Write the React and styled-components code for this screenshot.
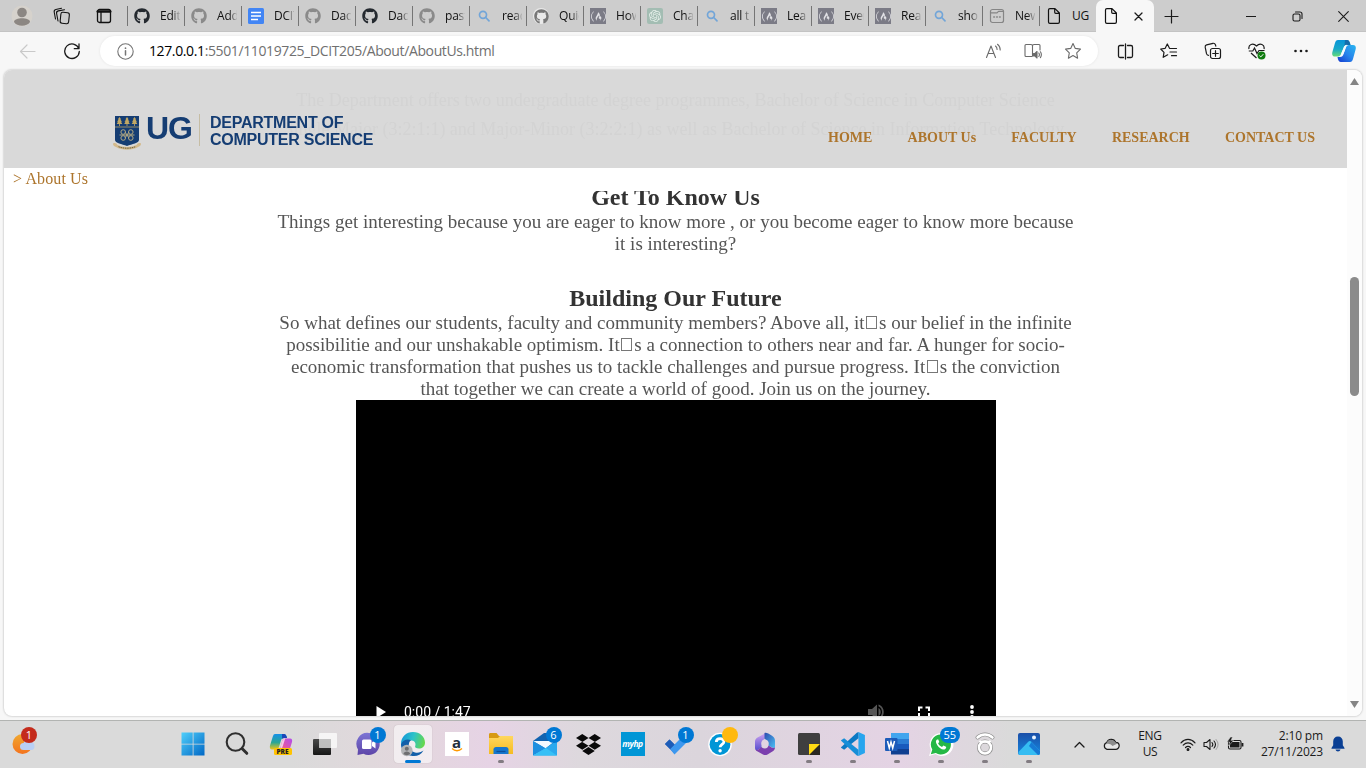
import React from 'react';
import styled, { createGlobalStyle, css } from 'styled-components';
import { FaGithub, FaDropbox, FaFreeCodeCamp } from 'react-icons/fa';
import { SiOpenai } from 'react-icons/si';

const Global = createGlobalStyle`
  * { box-sizing: border-box; }
  body { margin: 0; overflow: hidden; background: #f7f7f7; }
  svg { display: block; flex: none; }
`;

const ui = `"Open Sans", "Noto Sans", sans-serif`;
const serif = `"Liberation Serif", "Times New Roman", serif`;
const sans = `"Liberation Sans", Arial, sans-serif`;

const Screen = styled.div`
  width: 1366px;
  height: 768px;
  display: flex;
  flex-direction: column;
  overflow: hidden;
  background: #f7f7f7;
  font-family: ${ui};
`;

/* ---------- tab strip ---------- */
const TabStrip = styled.div`
  height: 32px;
  flex: none;
  display: flex;
  align-items: center;
  background: #cdcdcd;
  box-shadow: inset 0 -1px 0 #c3c3c3;
`;
const StripTools = styled.div`
  width: 127px;
  display: flex;
  align-items: center;
  padding-left: 11px;
  gap: 20px;
  svg:last-child { margin-left: 4px; }
`;
const Tab = styled.div`
  width: 57px;
  height: 20px;
  display: flex;
  align-items: center;
  border-left: 1px solid #757575;
  padding-left: 6px;
  gap: 10px;
`;
const TabLabel = styled.span`
  width: 20px;
  overflow: hidden;
  white-space: nowrap;
  font-size: 12px;
  line-height: 16px;
  letter-spacing: -0.2px;
  color: #111;
  ${p => p.$fade && css`mask-image: linear-gradient(90deg, #000 60%, transparent 105%);`}
`;
const ActiveTab = styled.div`
  width: 58px;
  height: 32px;
  display: flex;
  align-items: center;
  justify-content: space-between;
  padding: 0 11px 0 7px;
  background: #f7f7f7;
  border-radius: 7px 7px 0 0;
`;
const NewTab = styled.div`
  padding-left: 10px;
  flex: 1;
`;
const WindowButtons = styled.div`
  display: flex;
  align-items: center;
  gap: 35.500px;
  padding-right: 17px;
`;
const Tile = styled.div`
  width: 16px;
  height: 16px;
  flex: none;
  display: flex;
  align-items: center;
  justify-content: center;
  background: ${p => p.$bg};
  border-radius: ${p => p.$r || 0}px;
  color: ${p => p.$fg || '#fff'};
`;

/* ---------- toolbar ---------- */
const Toolbar = styled.div`
  height: 38px;
  flex: none;
  display: flex;
  align-items: center;
  background: #f7f7f7;
`;
const NavButtons = styled.div`
  width: 100px;
  flex: none;
  display: flex;
  align-items: center;
  gap: 27px;
  padding-left: 19px;
`;
const AddressBar = styled.div`
  width: 998px;
  flex: none;
  height: 30px;
  display: flex;
  align-items: center;
  padding: 0 16px 0 17px;
  border-radius: 15px;
  background: #fff;
  box-shadow: 0 0 3px rgba(0, 0, 0, 0.08);
`;
const Url = styled.span`
  flex: 1;
  margin-left: 15px;
  font-size: 14px;
  line-height: 20px;
  letter-spacing: -0.38px;
  white-space: nowrap;
  color: #707070;
  b { font-weight: 400; color: #000; }
`;
const AddressIcons = styled.div`
  display: flex;
  align-items: center;
  gap: 22px;
`;
const ToolIcons = styled.div`
  width: 268px;
  flex: none;
  display: flex;
  align-items: center;
  padding-left: 5px;
`;
const ToolSlot = styled.div`
  width: 44px;
  flex: none;
  display: flex;
  justify-content: center;
  &:last-child { width: 42px; }
`;

/* ---------- page ---------- */
const Viewport = styled.div`
  height: 646px;
  margin: 0 4px;
  flex: none;
  display: flex;
  border-radius: 8px;
  overflow: hidden;
  background: #fff;
`;
const ViewportShade = styled.div`
  flex: none;
  border-radius: 8px;
  filter: drop-shadow(0 0 1.2px rgba(0, 0, 0, 0.28));
`;
const Page = styled.div`
  width: 1343px;
  display: flex;
  flex-direction: column;
  font-family: ${serif};
`;
const Header = styled.header`
  position: relative;
  height: 98px;
  flex: none;
  display: flex;
  justify-content: space-between;
  padding: 0 32px 0 108px;
  background: #d9d9d9;
`;
const Underlay = styled.div`
  position: absolute;
  top: 16px;
  left: 0;
  width: 100%;
  text-align: center;
  font-size: 18px;
  line-height: 29px;
  white-space: nowrap;
  color: #d3d3d3;
`;
const Brand = styled.div`
  position: relative;
  display: flex;
  align-items: flex-start;
  padding-top: 44px;
  font-family: ${sans};
  font-weight: 700;
  color: #153d73;
`;
const Initials = styled.span`
  margin: -4px 0 0 4px;
  width: 53px;
  font-size: 32px;
  line-height: 36px;
  letter-spacing: -1.2px;
`;
const DeptName = styled.span`
  height: 32px;
  padding-left: 10px;
  border-left: 1px solid #c6bda4;
  font-size: 16px;
  line-height: 17px;
  letter-spacing: -0.25px;
  white-space: nowrap;
`;
const Menu = styled.nav`
  position: relative;
  display: flex;
  gap: 35.200px;
  padding-top: 59px;
  font-size: 14px;
  line-height: 17px;
  font-weight: 700;
  color: #ad752c;
  white-space: nowrap;
`;
const Crumb = styled.div`
  height: 23px;
  flex: none;
  padding: 2px 9px;
  font-size: 16px;
  line-height: 18px;
  letter-spacing: 0.12px;
  color: #ad752c;
`;
const Content = styled.main`
  flex: 1;
  min-height: 0;
  overflow: hidden;
  display: flex;
  flex-direction: column;
  align-items: center;
`;
const Title = styled.h2`
  margin: ${p => p.$top}px 0 0;
  font-size: 24px;
  line-height: 27px;
  color: #333;
`;
const Copy = styled.p`
  margin: 0;
  text-align: center;
  font-size: 19px;
  line-height: 22px;
  white-space: nowrap;
  color: #555;
`;
const Tofu = styled.span`
  display: inline-block;
  width: 11px;
  height: 13px;
  margin: 0 2px 0 1.500px;
  border: 1px solid #777;
`;
const Video = styled.div`
  width: 640px;
  height: 360px;
  flex: none;
  margin-left: 1px;
  background: #000;
  padding: 300px 12px 0 16px;
`;
const Controls = styled.div`
  height: 24px;
  display: flex;
  align-items: center;
  color: #fff;
  font: 14px Roboto, ${sans};
`;
const Time = styled.span`
  flex: 1;
  margin-left: 14px;
`;
const ControlIcons = styled.div`
  display: flex;
  gap: 24px;
`;
const Scrollbar = styled.div`
  width: 15px;
  display: flex;
  flex-direction: column;
  align-items: center;
  background: #fcfcfc;
  padding: 8px 0;
`;
const Track = styled.div`
  flex: 1;
  padding-top: 192px;
`;
const Thumb = styled.div`
  width: 9px;
  height: 119px;
  border-radius: 5px;
  background: #8b8b8b;
`;

/* ---------- taskbar ---------- */
const Taskbar = styled.div`
  height: 48px;
  margin-top: 4px;
  flex: none;
  display: flex;
  align-items: flex-start;
  border-top: 1px solid #b2b4b2;
  background: linear-gradient(90deg, #dadada 0, #dadada 290px, #e3d7dd 410px, #e6d3e5 490px, #ddd8dd 580px, #dbd5dc 700px, #e4d3e4 900px, #dadada 1010px);
`;
const Weather = styled.div`
  width: 170.500px;
  padding-left: 12px;
`;
const Apps = styled.div`
  display: flex;
  width: 881.500px;
`;
const TaskItem = styled.div`
  position: relative;
  width: 44px;
  height: 46px;
  flex: none;
  display: flex;
  align-items: center;
  justify-content: center;
`;
const FocusPlate = styled.div`
  width: 38px;
  height: 38px;
  display: flex;
  align-items: center;
  justify-content: center;
  border-radius: 4px;
  background: rgba(255, 255, 255, 0.55);
  box-shadow: 0 0 1px rgba(0, 0, 0, 0.25);
`;
const Marker = styled.i`
  position: absolute;
  bottom: 4px;
  left: ${p => (p.$active ? 14 : 19)}px;
  width: ${p => (p.$active ? 16 : 6)}px;
  height: 3px;
  border-radius: 2px;
  background: ${p => (p.$active ? '#0078d4' : '#827c82')};
`;
const Badge = styled.b`
  position: absolute;
  top: 6px;
  left: ${p => p.$left ?? 23}px;
  min-width: 16px;
  height: 16px;
  padding: 0 4px;
  border-radius: 8px;
  text-align: center;
  background: ${p => p.$bg || '#0078d4'};
  color: #fff;
  font-size: 11px;
  line-height: 16px;
  font-weight: 400;
`;
const Square = styled.div`
  width: 24px;
  height: 24px;
  display: flex;
  flex-direction: column;
  align-items: center;
  justify-content: center;
  background: ${p => p.$bg};
  color: ${p => p.$fg};
  font-size: ${p => p.$size}px;
  line-height: 12px;
  font-weight: 700;
  font-style: ${p => p.$style || 'normal'};
  letter-spacing: ${p => p.$track || 0}px;
`;
const Tag = styled.span`
  position: absolute;
  left: 15px;
  top: 27px;
  width: 18px;
  height: 7px;
  border-radius: 1.500px;
  background: #ffc400;
  color: #222;
  font-size: 6.500px;
  line-height: 7px;
  font-weight: 800;
  text-align: center;
`;
const Tray = styled.div`
  flex: 1;
  height: 46px;
  display: flex;
  align-items: center;
  padding-left: 22px;
`;
const TrayText = styled.div`
  width: ${p => p.$w}px;
  margin-left: ${p => p.$gap}px;
  text-align: ${p => p.$align};
  font-size: 12px;
  line-height: 16px;
  letter-spacing: ${p => p.$track}px;
  white-space: nowrap;
  color: #1b1b1b;
`;
const TrayItem = styled.div`
  margin-left: ${p => p.$gap}px;
`;

const Line = ({ w = 16, h, sw = 1, c = '#1b1b1b', children }) => (
  <svg width={w} height={h || w} viewBox={`0 0 ${w} ${h || w}`} fill="none" stroke={c} strokeWidth={sw} strokeLinecap="round" strokeLinejoin="round">
    {children}
  </svg>
);

const PageIcon = () => (
  <Line w={16} sw={1.2} c="#111"><path d="M2.500 2A1.400 1.400 0 0 1 3.900.6H9L13.400 5v9a1.400 1.400 0 0 1-1.400 1.400H3.900A1.400 1.400 0 0 1 2.500 14zM8.700 .8V4.300a1 1 0 0 0 1 1h3.500" /></Line>
);
const SearchFav = () => (
  <Line w={16} sw={1.7} c="#72a5d8"><circle cx="7" cy="6.800" r="3.500" /><path d="M9.700 9.500l3.300 3.300" /></Line>
);
const DocsFav = () => (
  <svg width="16" height="16" viewBox="0 0 16 16"><rect width="16" height="16" rx="1.500" fill="#4285f4" /><path d="M3 4.500h10M3 8h10M3 11.500h7" stroke="#fff" strokeWidth="1.700" /></svg>
);
const NewFav = () => (
  <Line w={16} c="#858585" sw={1.2}><rect x="1.500" y="1.500" width="13" height="13" rx="2" /><path d="M1.500 4.800h6.500l1.500-1.500h5" /><path d="M4.800 9h.6M7.700 9h.6M10.600 9h.6" strokeWidth="1.600" /></Line>
);
const Camp = () => <Tile $bg="#7b7b86" $fg="#e2e2e6"><FaFreeCodeCamp size={15} /></Tile>;
const Chat = () => <Tile $bg="#a3bdb3" $fg="#e6f0eb" $r={2}><SiOpenai size={12} /></Tile>;
const Git = ({ dim }) => <FaGithub size={16} color={dim ? '#8a8a8a' : '#24292f'} />;
const GitRound = () => <Tile $bg="#e9e9e9" $fg="#777" $r={8}><FaGithub size={15} /></Tile>;

const tabs = [
  [<Git />, 'Edit'], [<Git dim />, 'Add'], [<DocsFav />, 'DCIT'], [<Git dim />, 'Daq'], [<Git />, 'Daq'],
  [<Git dim />, 'past'], [<SearchFav />, 'read'], [<GitRound />, 'Quic'], [<Camp />, 'How'], [<Chat />, 'Cha'],
  [<SearchFav />, 'all t'], [<Camp />, 'Lear'], [<Camp />, 'Ever'], [<Camp />, 'Rea'], [<SearchFav />, 'sho'],
  [<NewFav />, 'New'], [<PageIcon />, 'UG'],
];

const Crest = () => (
  <svg width="30" height="36" viewBox="0 0 30 36">
    <path d="M3 2h24v24c0 3-7 4-12 6C10 30 3 29 3 26z" fill="#153d73" />
    <path d="M3 13h24" stroke="#b9a265" strokeWidth=".8" />
    <g fill="#c2a864">
      {[7.5, 15, 22.5].map(x => <path key={x} d={`M${x} 3l1.600 2.300-.7.200 1.600 2.200-1 .1 1.300 2.200H${x + 0.4}v2h-.8v-2h-2.400l1.300-2.200-1-.1 1.600-2.200-.7-.2z`} />)}
    </g>
    <g fill="none" stroke="#b5aa82" strokeWidth="1">
      <circle cx="11.200" cy="18" r="2.300" /><circle cx="18.800" cy="18" r="2.300" /><circle cx="11.200" cy="24" r="2.300" /><circle cx="18.800" cy="24" r="2.300" />
      <path d="M7.500 21h15M13 18l4 6M17 18l-4 6" />
    </g>
    <path d="M1 29.500c2.500-1 3.500 0 4.500 1.500 5 2.600 14 2.600 19 0 1-1.500 2-2.500 4.500-1.500 0 1.500-.5 2.500-3 3.500-6 3.600-16 3.600-22 0-2.500-1-3-2-3-3.500z" fill="#d3b98a" />
    <path d="M6.500 32.700c5 2 12 2 17 0" stroke="#6b6045" strokeWidth="1" fill="none" strokeDasharray="1.500 .7" />
  </svg>
);

const Copilot = () => (
  <svg width="24" height="22" viewBox="0 0 24 22">
    <defs>
      <linearGradient id="cpA" x1="0" y1="0" x2="0" y2="1"><stop offset="0" stopColor="#0794d8" /><stop offset=".55" stopColor="#18a8c9" /><stop offset="1" stopColor="#65dc78" /></linearGradient>
      <linearGradient id="cpB" x1="1" y1="0" x2="0" y2="1"><stop offset="0" stopColor="#29b6f0" /><stop offset=".5" stopColor="#2785ec" /><stop offset="1" stopColor="#1439ce" /></linearGradient>
    </defs>
    <path d="M6 0h9c2 0 3 2 3.500 5H15c-2 0-3 1-3.500 3L9 14c-.7 2-2 2.500-4 2.500H3c-2.500 0-3.300-2-2.600-4.500l2.600-9C3.600 1 4.400 0 6 0z" fill="url(#cpA)" />
    <path d="M18 22H9c-2 0-3-1.500-3.500-5H8c2 0 3-1 3.500-3L14 7.500C14.700 5.500 16 5 18 5h3c2.500 0 3.300 2 2.600 4.500l-2.600 9.500c-.6 2-1.400 3-3 3z" fill="url(#cpB)" />
    <path d="M13 0h2c2 0 3 2 3.500 5H15c-1.200 0-2 .4-2.600 1.200z" fill="#185e9e" opacity=".75" />
    <path d="M9.500 13l2.500-6c.5-1 1.300-2 2.600-2.200L12 12.500c-.6 1.500-1.400 3.500-3.500 4z" fill="#f4fbff" />
  </svg>
);
const CopilotPre = () => (
  <svg width="24" height="24" viewBox="0 0 24 24">
    <defs>
      <linearGradient id="prA" x1="0" y1="0" x2="0" y2="1"><stop offset="0" stopColor="#1590e8" /><stop offset=".55" stopColor="#2ba695" /><stop offset="1" stopColor="#f0c516" /></linearGradient>
      <linearGradient id="prB" x1="1" y1="0" x2="0" y2="1"><stop offset="0" stopColor="#b04df0" /><stop offset=".5" stopColor="#e057a8" /><stop offset="1" stopColor="#fb7b55" /></linearGradient>
    </defs>
    <path d="M6 2h9c1.500 0 2.500 1.500 3 4h-3c-2 0-2.600 1-3.200 3L10 15c-.7 2-2 2.500-4 2.500H3C1 17.500.5 15.500 1 13.500l2.800-9C4.400 2.800 5 2 6 2z" fill="url(#prA)" />
    <path d="M13 2h2c1.500 0 2.500 1.500 3 4h-3l-2 .8z" fill="#1b45b8" />
    <path d="M17 22h-6c-2 0-2.500-1.500-3-4 2 0 3-1 3.500-3L13.200 9c.6-2 1.500-2.600 3.300-2.600H21c2 0 2.500 1.500 2 3.500l-3 9.500c-.6 1.800-1.500 2.600-3 2.600z" fill="url(#prB)" />
    <path d="M11.500 15l1.700-6c.5-1.600 1.300-2.500 3-2.600L13.500 15c-.4 1.300-1 2-2 2z" fill="#f5c7e6" />
  </svg>
);

const icons = {
  start: (
    <svg width="24" height="24" viewBox="0 0 24 24">
      <defs><linearGradient id="win" x1="0" y1="0" x2="1" y2="1"><stop offset="0" stopColor="#4fcffb" /><stop offset="1" stopColor="#0067c5" /></linearGradient></defs>
      <path fill="url(#win)" d="M.5 .5h11.200v11.200H.5zM12.500 .5h11v11.200h-11zM.5 12.500h11.200v11H.5zM12.500 12.500h11v11h-11z" />
    </svg>
  ),
  search: <Line w={24} sw={2.1} c="#2f2f2f"><circle cx="10.500" cy="10" r="8.800" /><path d="M17.500 17l4.300 4.300" strokeWidth="3" /></Line>,
  taskview: (
    <svg width="24" height="24" viewBox="0 0 24 24">
      <defs><linearGradient id="tv" x1="0" y1="0" x2="0" y2="1"><stop offset="0" stopColor="#4a4a4a" /><stop offset="1" stopColor="#161616" /></linearGradient></defs>
      <rect x="0" y="7" width="18" height="16" rx="1" fill="url(#tv)" /><rect x="6" y="1" width="18" height="15" rx="1" fill="#fff" opacity=".72" /><path d="M6 7h12v9H6z" fill="#bbb" opacity=".7" />
    </svg>
  ),
  chat: (
    <svg width="26" height="26" viewBox="0 0 26 26">
      <defs><linearGradient id="ct" x1="0" y1="0" x2="0" y2="1"><stop offset="0" stopColor="#7c74d4" /><stop offset="1" stopColor="#5d45a8" /></linearGradient></defs>
      <path d="M13 2a11 11 0 1 1-5.500 20.700L1.500 24l.5-5.500A11 11 0 0 1 13 2z" fill="url(#ct)" />
      <rect x="6" y="8.500" width="9.500" height="9.500" rx="1.500" fill="#fff" /><path d="M16 11.500l3.500-2.500v8.500L16 15z" fill="#fff" />
    </svg>
  ),
  edge: (
    <svg width="26" height="26" viewBox="0 0 26 26">
      <defs><linearGradient id="eg" x1="0" y1=".3" x2="1" y2=".5"><stop offset="0" stopColor="#1596d8" /><stop offset=".5" stopColor="#2cc3c8" /><stop offset="1" stopColor="#67d84c" /></linearGradient></defs>
      <path d="M1 13C1 5.500 6.500 1 13 1c7 0 12 5 12 10.500 0 4-3 6-6 6-2.800 0-4.500-1-3.800-2.400.8-1.600.5-5.100-3.700-5.600C6 9 2 12 1 16z" fill="url(#eg)" />
      <path d="M1 13.500C2.500 9 7.500 7.500 11 9.300 7.500 11 7.500 20 15 21.500c3.500.7 6.500-.5 8.500-2C21 24 17 25.500 12.500 25 5.500 24.500 1 19 1 13.500z" fill="#135fa9" />
      <circle cx="6.800" cy="19.500" r="5.800" fill="#b2b3b5" /><circle cx="6.800" cy="17.800" r="2" fill="#6e6e70" /><path d="M3.500 23c0-3.500 6.600-3.500 6.600 0-1.500 1.500-5 1.500-6.600 0z" fill="#6e6e70" />
    </svg>
  ),
  folder: (
    <svg width="26" height="24" viewBox="0 0 26 24">
      <defs><linearGradient id="fo" x1="0" y1="0" x2="0" y2="1"><stop offset="0" stopColor="#ffd75e" /><stop offset="1" stopColor="#f5bb20" /></linearGradient></defs>
      <path d="M1 2.500C1 1.500 1.600 1 2.500 1h6l2.500 3H25v5H1z" fill="#d79a12" /><path d="M1 6h9l2-2h13v18H1z" fill="url(#fo)" />
      <path d="M5.500 22v-4.500c0-1.500 1-2.500 2.500-2.500h10c1.500 0 2.500 1 2.500 2.500V22z" fill="#1576ce" /><path d="M8.500 19.500h9" stroke="#0c4f9c" strokeWidth="1.300" />
    </svg>
  ),
  mail: (
    <svg width="26" height="26" viewBox="0 0 26 26">
      <path d="M1 10L12 2h13v9l-12 8z" fill="#1263b0" /><path d="M1 10h22l-9.500 7.500z" fill="#f3f9ff" />
      <path d="M1 10l13 7.500L1 24.500z" fill="#1d8fe0" /><path d="M25 9v15.500H1L14 17z" fill="#2ba9ee" /><path d="M14 17l11 7.500H1z" fill="#36c0f6" />
    </svg>
  ),
  todo: (
    <svg width="26" height="26" viewBox="0 0 26 26"><path d="M1 13l4.500-4.500 5 5v9z" fill="#1d5cb8" /><path d="M6 18l4.500-4.500L18 6l5 5-12.500 12.500z" fill="#3d97ee" /><path d="M1 13l4.500-4.500 5 5L6 18z" fill="#1d5cb8" /></svg>
  ),
  help: (
    <svg width="26" height="26" viewBox="0 0 26 26"><circle cx="12" cy="13.500" r="11.800" fill="#fff" /><circle cx="12" cy="13.500" r="10.400" fill="#0096d6" /><path d="M8.300 11c0-4.500 7.600-4.500 7.600-.3 0 2.600-3.800 2.800-3.800 5.500" stroke="#fff" strokeWidth="2.800" fill="none" /><circle cx="12.100" cy="19.800" r="1.700" fill="#fff" /></svg>
  ),
  m365: (
    <svg width="24" height="24" viewBox="0 0 24 24">
      <defs><linearGradient id="mA" x1="0" y1="0" x2="0" y2="1"><stop offset="0" stopColor="#cfa4f0" /><stop offset="1" stopColor="#5a4fd0" /></linearGradient><linearGradient id="mB" x1="0" y1="0" x2="1" y2="1"><stop offset="0" stopColor="#2c4cae" /><stop offset="1" stopColor="#4cc0f4" /></linearGradient></defs>
      <path d="M13 1L4.500 5.500C3 6.400 2 7.700 2 9.500V16c0 1.800 1.500 2.500 3 1.700l3.500-2.200V11c0-2 1.300-3 3-4z" fill="url(#mA)" />
      <path d="M11.500 1c2-.6 4 .6 7.500 2.800C21.500 5.300 22 7 22 9v6.500c-1 1-2.500.5-6.500-2V11c0-2-1.500-3-4-4.200z" fill="url(#mB)" />
      <path d="M2 15.500c0 2 .8 3 2.200 3.800L10 22.500c1.500.8 3 .8 4.500 0l5.300-3.200c1.500-.9 2.200-2.300 2.200-3.800-1.500 1-3 .5-6.500-2-.5 1.800-1.700 3-3.500 3-1.500 0-2.500-.5-3.500-1.500L5 17.700c-1.500.8-3 0-3-2.200z" fill="#7b3fae" />
      <circle cx="12" cy="11.500" r="3.500" fill="#e2d4e1" />
    </svg>
  ),
  sticky: <svg width="24" height="24" viewBox="0 0 24 24"><rect x="1" y="1" width="22" height="22" rx="1.500" fill="#3f3f3f" /><path d="M12 12h11v11H12z" fill="#2a2822" /><path d="M12 12h11L12 23z" fill="#ffdb14" /></svg>,
  vscode: (
    <svg width="26" height="26" viewBox="0 0 24 24"><path d="M17 1l6 2.600v16.800L17 23z" fill="#27a5ee" /><path d="M17 1v5.800L3.800 17.200 1 15.500v-.6L15.500 1.500z" fill="#0b79c4" /><path d="M17 23v-5.800L3.800 6.800 1 8.500v.6L15.500 22.500z" fill="#168ed8" /></svg>
  ),
  whatsapp: (
    <svg width="26" height="26" viewBox="0 0 26 26"><path d="M13 2a11.500 11.500 0 1 1-5.500 21L1 25l2-6A11.500 11.500 0 0 1 13 2z" fill="#fff" /><path d="M13 3.500a10 10 0 1 1-5.200 18.600L2.800 23.300l1.500-4.700A10 10 0 0 1 13 3.500z" fill="#25b846" /><path d="M9 8.500c-1.500 1.200-1.500 3 .3 5.700 2.200 3.300 5.700 5.200 8 3.700 1-.7 1-2 .7-2.200l-2.600-1.300-1.400 1.600c-1.700-.6-3.300-2.200-3.900-3.700l1.200-1.400-1-2.500z" fill="#fff" /></svg>
  ),
  ring: (
    <svg width="24" height="26" viewBox="0 0 24 26" fill="none" strokeLinecap="round"><g stroke="#8b8b8b" strokeWidth="4"><circle cx="12" cy="16.500" r="6" /><path d="M4.500 6.500C9 2.500 15 2.500 19.500 6.500" /></g><g stroke="#fff" strokeWidth="2.600"><circle cx="12" cy="16.500" r="6" /><path d="M4.500 6.500C9 2.500 15 2.500 19.500 6.500" /><path d="M7 10.500h10" strokeWidth="2" /></g></svg>
  ),
  photos: (
    <svg width="24" height="24" viewBox="0 0 24 24"><defs><linearGradient id="ph" x1="0" y1="0" x2="0" y2="1"><stop offset="0" stopColor="#1b4fa8" /><stop offset="1" stopColor="#1588e0" /></linearGradient></defs><rect x="1" y="1" width="22" height="22" rx="2" fill="url(#ph)" /><path d="M1.500 20L11 10c1.200-1.300 2.500-1.300 3.700 0L23 19v2c0 1.200-.8 2-2 2H3c-1 0-1.500-1-1.500-3z" fill="#35bdf2" /><path d="M14.500 10l8.500 9v2c0 1.200-.8 2-2 2l-9-9z" fill="#1679d4" /><circle cx="17" cy="5.500" r="2" fill="#e9f3ff" /></svg>
  ),
  word: (
    <svg width="26" height="24" viewBox="0 0 26 24"><path d="M7 1h18v6H7z" fill="#42a5ee" /><path d="M7 7h18v5H7z" fill="#2b7cd3" /><path d="M7 12h18v5H7z" fill="#185abd" /><path d="M7 17h18v5.500H7z" fill="#103f91" /><rect x="1" y="6" width="12.500" height="13" rx="1" fill="#1c5bb9" /><path d="M3.500 9l1.800 7L7 10l1.700 6 1.800-7" stroke="#fff" strokeWidth="1.500" fill="none" /></svg>
  ),
};

const apps = [
  { i: icons.start }, { i: icons.search }, { i: <><CopilotPre /><Tag>PRE</Tag></> }, { i: icons.taskview },
  { i: icons.chat, badge: '1' }, { i: icons.edge, active: true },
  { i: <Square $bg="#fff" $fg="#232f3e" $size={15}>a<svg width="12" height="4" viewBox="0 0 12 4"><path d="M1 .5c3 3 7 3 10 0" stroke="#ff9900" strokeWidth="1.300" fill="none" /></svg></Square> },
  { i: icons.folder, run: true }, { i: icons.mail, badge: '6' },
  { i: <FaDropbox size={25} color="#0a0a0a" /> },
  { i: <Square $bg="#0096d6" $fg="#fff" $size={8.5} $style="italic" $track={-0.5}>myhp</Square> },
  { i: icons.todo, badge: '1' }, { i: icons.help, badge: '', bg: '#ffb90f' }, { i: icons.m365 },
  { i: icons.sticky, run: true }, { i: icons.vscode, run: true }, { i: icons.word, run: true },
  { i: icons.whatsapp, badge: '55', run: true, at: 21 }, { i: icons.ring, run: true }, { i: icons.photos, run: true },
];

const tools = [
  <Line w={17} sw={1.3}><path d="M6.500 2.500H3c-1 0-1.500.5-1.500 1.500v9c0 1 .5 1.500 1.500 1.500h3.500M10.500 2.500H14c1 0 1.500.5 1.500 1.500v9c0 1-.5 1.500-1.500 1.500h-3.500M8.500 1v15" /></Line>,
  <Line w={18} sw={1.2}><path d="M11 6.500L9.500 6.300 7.300 2 5.200 6.300l-4.500.7L4 10.300l-.8 5 4.500-2.500M11 6.500h5.500M10 10h6.500M11.500 13.700h5" /></Line>,
  <Line w={18} sw={1.2}><rect x="6.500" y="6.500" width="10" height="10" rx="2" /><path d="M11.500 8.700v5.600M8.700 11.500h5.600M4.500 13.300c-1 0-1.700-.6-2-1.600L1.200 5.200c-.2-1.200.3-2 1.400-2.300L9 1.300c1.200-.2 2 .3 2.400 1.400l.4 1.500" /></Line>,
  <svg width="18" height="18" viewBox="0 0 18 18"><path d="M1 7C0 2.500 5 .5 8.500 4 12 .5 17 2.500 16 7M3 11l5.500 5M.8 9h4l1.700-3 2.500 5.500 2-3h5.500" fill="none" stroke="#1b1b1b" strokeWidth="1.200" /><circle cx="13.500" cy="13.500" r="4" fill="#107c10" /><path d="M11.500 13.700l1.300 1.200 2.500-2.700" stroke="#fff" fill="none" /></svg>,
  <svg width="16" height="4" viewBox="0 0 16 4" fill="#1b1b1b"><circle cx="2.500" cy="2" r="1.300" /><circle cx="8" cy="2" r="1.300" /><circle cx="13.500" cy="2" r="1.300" /></svg>,
  <Copilot />,
];

export default function App() {
  return (
    <Screen>
      <Global />
      <TabStrip>
        <StripTools>
          <svg width="22" height="22" viewBox="0 0 22 22"><circle cx="11" cy="11" r="10.500" fill="#d6d2cc" /><circle cx="11" cy="7.500" r="4.800" fill="#8c8783" /><path d="M3 17c0-5 16-5 16 0-3 5-13 5-16 0z" fill="#8c8783" /></svg>
          <Line w={18} sw={1.1} c="#111"><rect x="7.500" y="5.500" width="8.500" height="11" rx="2" transform="rotate(6 12 11)" /><path d="M5 14L3.600 6.500C3.300 5 4 4.200 5.300 3.900L11.500 2.700M2.500 12L1.200 5C1 3.600 1.500 2.800 2.800 2.500L8.500 1.200" /></Line>
          <Line w={18} sw={1.3} c="#111"><rect x="2.500" y="2.500" width="13" height="13" rx="2" /><path d="M2.800 4.500h12.400" strokeWidth="2.600" /><path d="M6 5v10" /></Line>
        </StripTools>
        {tabs.map(([icon, text], n) => (
          <Tab key={n}>{icon}<TabLabel $fade={text !== 'UG'}>{text}</TabLabel></Tab>
        ))}
        <ActiveTab><PageIcon /><Line w={9} sw={1.3}><path d="M1 1l7 7M8 1L1 8" /></Line></ActiveTab>
        <NewTab><Line w={15} sw={1.2}><path d="M7.500 1v13M1 7.500h13" /></Line></NewTab>
        <WindowButtons>
          <Line w={10}><path d="M0 5.500h10" /></Line>
          <Line w={11} sw={1.1}><rect x="1" y="3" width="7" height="7" rx="1.500" /><path d="M3.500 1h4.300C9.400 1 10 1.800 10 3v4.500" /></Line>
          <Line w={11} sw={1.1}><path d="M.7 .7l9.600 9.600M10.300 .7L.7 10.300" /></Line>
        </WindowButtons>
      </TabStrip>

      <Toolbar>
        <NavButtons>
          <Line w={17} c="#c9c9c9" sw={1.2}><path d="M16 8.500H1.500M8 2L1.500 8.500 8 15" /></Line>
          <Line w={18} c="#1b1b1b" sw={1.3}><path d="M15.800 6.500A7.300 7.300 0 1 0 16.300 9.500M16 2v4.700h-4.700" /></Line>
        </NavButtons>
        <AddressBar>
          <Line w={17} c="#757575" sw={1.1}><circle cx="8.500" cy="8.500" r="7.700" /><path d="M8.500 7.800v4.200" strokeWidth="1.500" /><path d="M8.500 5v.2" strokeWidth="1.700" /></Line>
          <Url><b>127.0.0.1</b>:5501/11019725_DCIT205/About/AboutUs.html</Url>
          <AddressIcons>
            <Line w={17} c="#6b6b6b" sw={1.1}><path d="M1.500 14.500L6 3l4.500 11.500M3 10.500h6M10.500 3c1.200 1 1.600 2 1.600 3.500M12.500 1.300c2 1.500 2.700 3.500 2.700 5.700" /></Line>
            <Line w={18} c="#6b6b6b" sw={1.1}><path d="M8 14.500H2c-.6 0-1-.4-1-1v-10c0-.6.400-1 1-1h5c.6 0 1.500.4 1.500 1 0-.6.900-1 1.500-1h5c.6 0 1 .4 1 1V8M8.500 3.500V14" /><path d="M9.500 11.500h1.500l2-2v6.500l-2-2H9.500z" fill="#6b6b6b" /><path d="M14.800 11c.7 1 .7 2.500 0 3.500M16.400 9.800c1.200 1.800 1.200 4 0 5.800" /></Line>
            <Line w={18} c="#6b6b6b" sw={1.1}><path d="M9 1.500l2.300 4.900 5.200.7-3.800 3.700.9 5.400L9 13.600l-4.600 2.600.9-5.400L1.500 7.100l5.200-.7z" /></Line>
          </AddressIcons>
        </AddressBar>
        <ToolIcons>{tools.map((icon, n) => <ToolSlot key={n}>{icon}</ToolSlot>)}</ToolIcons>
      </Toolbar>

      <ViewportShade>
        <Viewport>
          <Page>
            <Header>
              <Underlay>
                The Department offers two undergraduate degree programmes, Bachelor of Science in Computer Science<br />
                Single Major (3:2:1:1) and Major-Minor (3:2:2:1) as well as Bachelor of Science in Information Technology.
              </Underlay>
              <Brand>
                <Crest />
                <Initials>UG</Initials>
                <DeptName>DEPARTMENT OF<br />COMPUTER SCIENCE</DeptName>
              </Brand>
              <Menu><span>HOME</span><span>ABOUT Us</span><span>FACULTY</span><span>RESEARCH</span><span>CONTACT US</span></Menu>
            </Header>
            <Crumb>&gt; About Us</Crumb>
            <Content>
              <Title $top={-7}>Get To Know Us</Title>
              <Copy>
                Things get interesting because you are eager to know more , or you become eager to know more because<br />
                it is interesting?
              </Copy>
              <Title $top={30}>Building Our Future</Title>
              <Copy>
                So what defines our students, faculty and community members? Above all, it<Tofu />s our belief in the infinite<br />
                possibilitie and our unshakable optimism. It<Tofu />s a connection to others near and far. A hunger for socio-<br />
                economic transformation that pushes us to tackle challenges and pursue progress. It<Tofu />s the conviction<br />
                that together we can create a world of good. Join us on the journey.
              </Copy>
              <Video>
                <Controls>
                  <svg width="18" height="18" viewBox="0 0 18 18"><path d="M4.500 3v12L14 9z" fill="#fff" /></svg>
                  <Time>0:00 / 1:47</Time>
                  <ControlIcons>
                    <svg width="24" height="24" viewBox="0 0 24 24" fill="#555"><path d="M4 9v6h4l5 4.500v-15L8 9zM14.500 8v8c3-1.500 3-6.500 0-8z" /><path d="M14.500 4.500c7 2 7 13 0 15v-1.700c4.700-2 4.700-9.600 0-11.600z" /></svg>
                    <svg width="24" height="24" viewBox="0 0 24 24" fill="none" stroke="#fff" strokeWidth="2"><path d="M7 11V7.500h3.500M13.500 7.500H17V11M17 13v4h-4M11 17H7v-4" /></svg>
                    <svg width="24" height="24" viewBox="0 0 24 24" fill="#fff"><circle cx="12" cy="7" r="1.900" /><circle cx="12" cy="12" r="1.900" /><circle cx="12" cy="17" r="1.900" /></svg>
                  </ControlIcons>
                </Controls>
              </Video>
            </Content>
          </Page>
          <Scrollbar>
            <svg width="9" height="7" viewBox="0 0 9 7"><path d="M4.500 0L9 7H0z" fill="#858585" /></svg>
            <Track><Thumb /></Track>
            <svg width="9" height="7" viewBox="0 0 9 7"><path d="M4.500 7L9 0H0z" fill="#858585" /></svg>
          </Scrollbar>
        </Viewport>
      </ViewportShade>

      <Taskbar>
        <Weather>
          <TaskItem>
            <svg width="44" height="46" viewBox="0 0 44 46"><defs><linearGradient id="sun" x1="0" y1="0" x2="0" y2="1"><stop offset="0" stopColor="#f0a830" /><stop offset="1" stopColor="#f4731d" /></linearGradient></defs><circle cx="10.500" cy="23" r="10" fill="url(#sun)" /><path d="M11.500 29a3.500 3.500 0 0 1 0-7 4.500 4.500 0 0 1 8-1c3.500 0 4.500 8 0 8z" fill="#b9cff5" /></svg>
            <Badge $bg="#c42b1c" $left={9}>1</Badge>
          </TaskItem>
        </Weather>
        <Apps>
          {apps.map((a, n) => (
            <TaskItem key={n}>
              {a.active ? <FocusPlate>{a.i}</FocusPlate> : a.i}
              {a.badge !== undefined && <Badge $bg={a.bg} $left={a.at}>{a.badge}</Badge>}
              {(a.run || a.active) && <Marker $active={a.active} />}
            </TaskItem>
          ))}
        </Apps>
        <Tray>
          <Line w={11} h={7} sw={1.3}><path d="M1 6l4.500-4.500L10 6" /></Line>
          <TrayItem $gap={18}><svg width="17" height="12" viewBox="0 0 17 12"><path d="M4 11.300a3.500 3.500 0 0 1-.3-6.700 4.800 4.800 0 0 1 9-.3 3.500 3.500 0 0 1 0 7z" fill="#e6e6e6" stroke="#1b1b1b" strokeWidth="1.200" /><path d="M1.500 7.500C3.500 5 7 5 9.500 8l5-2.500-2-1.200C9.500.8 5 1 4 4.500z" fill="#8c8c8c" /></svg></TrayItem>
          <TrayText $w={34} $gap={13} $align="center" $track={-0.3}>ENG<br />US</TrayText>
          <TrayItem $gap={13}><Line w={16} h={13} sw={1.2}><path d="M1 4.800c4-4.500 10-4.500 14 0M3.200 7.200c3-3 6.600-3 9.600 0M5.500 9.500c1.600-1.500 3.400-1.500 5 0" /><circle cx="8" cy="11.500" r=".9" fill="#1b1b1b" /></Line></TrayItem>
          <TrayItem $gap={7}><Line w={16} h={13} sw={1.1}><path d="M1 4.500h2.500L7 1.500v10L3.500 8.500H1zM9 4.500c1 1.200 1 2.800 0 4M11 3c1.700 2 1.700 5 0 7" /><path d="M13 1.500c2.500 3 2.500 7 0 10" stroke="#aaa" /></Line></TrayItem>
          <TrayItem $gap={8}><svg width="17" height="14" viewBox="0 0 17 14"><rect x="1.500" y="3.500" width="12.500" height="8.500" rx="1.500" fill="#dadada" stroke="#1b1b1b" strokeWidth="1.100" /><rect x="3" y="5" width="9.500" height="5.500" fill="#1b1b1b" /><path d="M15.500 6v3.500" stroke="#1b1b1b" strokeWidth="1.800" /><path d="M3.500 0L0 5h2.600L1.500 9l5-5.500H4L5.500 0z" fill="#1b1b1b" stroke="#dadada" strokeWidth=".5" /></svg></TrayItem>
          <TrayText $w={70} $gap={9} $align="right" $track={-0.16}>2:10 pm<br />27/11/2023</TrayText>
          <TrayItem $gap={8}><svg width="14" height="16" viewBox="0 0 14 16" fill="#0a3f94"><path d="M7 .5c3 0 4.800 2 4.800 5v3.700L13.500 12v.7H.5V12l1.700-2.800V5.500c0-3 1.800-5 4.800-5zM4.500 13.500h5C9 16 5 16 4.500 13.500z" /></svg></TrayItem>
        </Tray>
      </Taskbar>
    </Screen>
  );
}
